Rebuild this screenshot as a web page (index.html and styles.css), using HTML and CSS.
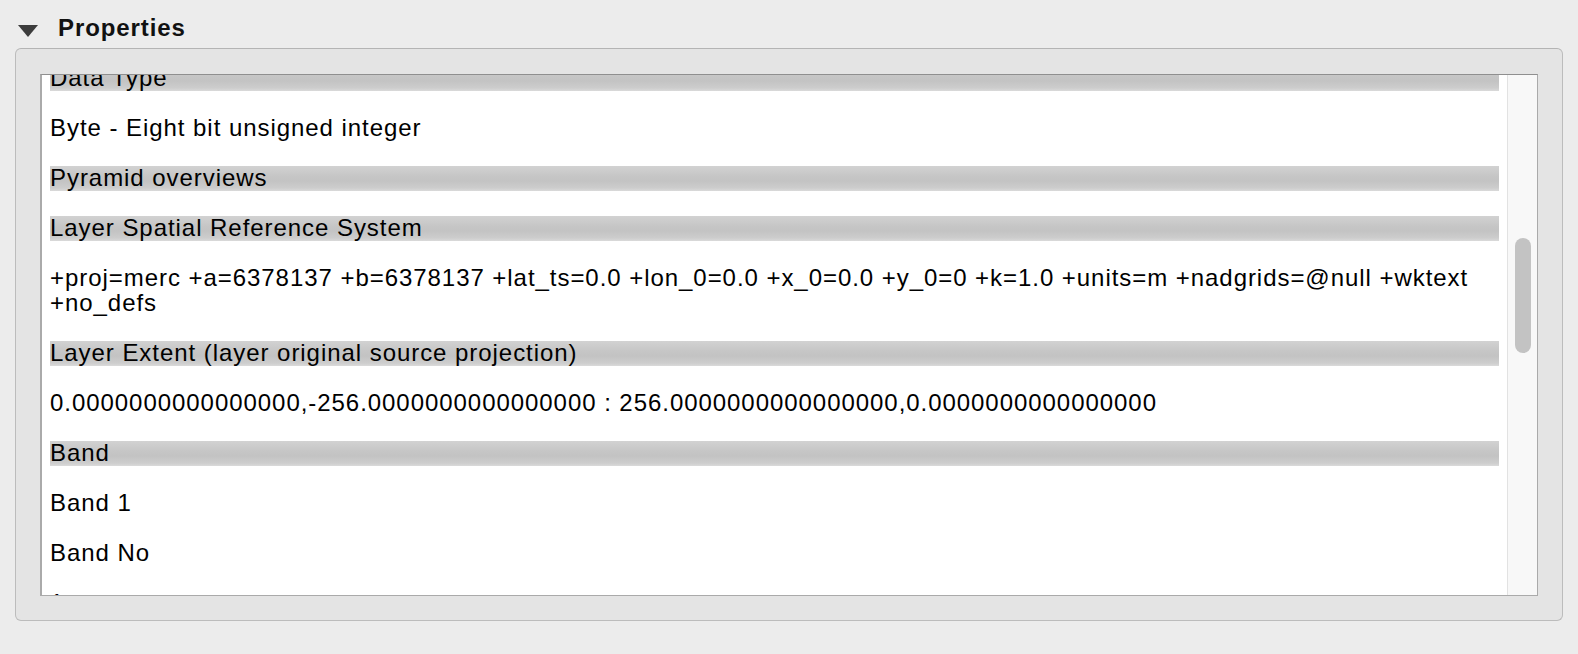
FILE: index.html
```html
<!DOCTYPE html>
<html>
<head>
<meta charset="utf-8">
<title>Properties</title>
<link rel="stylesheet" href="styles.css">
</head>
<body>
<div class="page">
  <div class="header">
    <svg class="tri" width="20" height="12" viewBox="0 0 20 12"><polygon points="0,0 20,0 10,12" fill="#3c3c3c"/></svg>
    <span class="title">Properties</span>
  </div>
  <div class="group">
    <div class="view">
      <div class="content">
        <div class="inner">
          <div class="bar">Data Type</div>
          <div class="para">Byte - Eight bit unsigned integer</div>
          <div class="bar">Pyramid overviews</div>
          <div class="bar">Layer Spatial Reference System</div>
          <div class="para">+proj=merc +a=6378137 +b=6378137 +lat_ts=0.0 +lon_0=0.0 +x_0=0.0 +y_0=0 +k=1.0 +units=m +nadgrids=@null +wktext<br>+no_defs</div>
          <div class="bar">Layer Extent (layer original source projection)</div>
          <div class="para">0.0000000000000000,-256.0000000000000000 : 256.0000000000000000,0.0000000000000000</div>
          <div class="bar">Band</div>
          <div class="para">Band 1</div>
          <div class="para">Band No</div>
          <div class="para">1</div>
        </div>
      </div>
      <div class="scrollbar"><div class="thumb"></div></div>
    </div>
  </div>
</div>
</body>
</html>
```
FILE: styles.css
```css
html, body {
  margin: 0;
  padding: 0;
  background: #ececec;
}
body {
  font-family: "Liberation Sans", Arial, Helvetica, sans-serif;
  color: #000;
}
.page {
  width: 1578px;
  height: 654px;
  box-sizing: border-box;
  padding: 0 15px;
}
.header {
  display: flex;
  align-items: flex-start;
  height: 48px;
  box-sizing: border-box;
  padding: 15px 0 0 3px;
}
.tri {
  margin-top: 10px;
  margin-right: 20px;
  flex: none;
}
.title {
  font-weight: bold;
  font-size: 24px;
  line-height: 25px;
  letter-spacing: 0.9px;
  color: #111;
}
.group {
  height: 573px;
  box-sizing: border-box;
  border: 1px solid #bcbcbc;
  border-top-color: #b4b4b4;
  border-radius: 6px;
  background: #e4e4e4;
  padding: 25px 24px 24px 24px;
}
.view {
  height: 100%;
  box-sizing: border-box;
  display: flex;
  background: #fff;
  border: 1px solid #aaaaaa;
  border-top-color: #8f8f8f;
  border-left-width: 2px;
}
.content {
  flex: 1;
  overflow: hidden;
  padding: 0 8px 0 8px;
  font-size: 24px;
  line-height: 25px;
  letter-spacing: 0.95px;
}
.inner {
  margin-top: -9px;
}
.bar {
  height: 25px;
  box-sizing: border-box;
  line-height: 23px;
  padding-bottom: 2px;
  margin-bottom: 25px;
  white-space: nowrap;
  background: linear-gradient(to bottom, #d2d2d2 0%, #c6c6c6 40%, #c3c3c3 60%, #cdcdcd 88%, #dadada 100%);
}
.para {
  margin-top: -1px;
  margin-bottom: 26px;
  white-space: nowrap;
}
.scrollbar {
  flex: none;
  width: 30px;
  box-sizing: border-box;
  border-left: 1px solid #e2e2e2;
  background: #f8f8f8;
  padding-top: 163px;
  padding-left: 7px;
}
.thumb {
  width: 16px;
  height: 115px;
  border-radius: 8px;
  background: #c3c3c3;
}
```
